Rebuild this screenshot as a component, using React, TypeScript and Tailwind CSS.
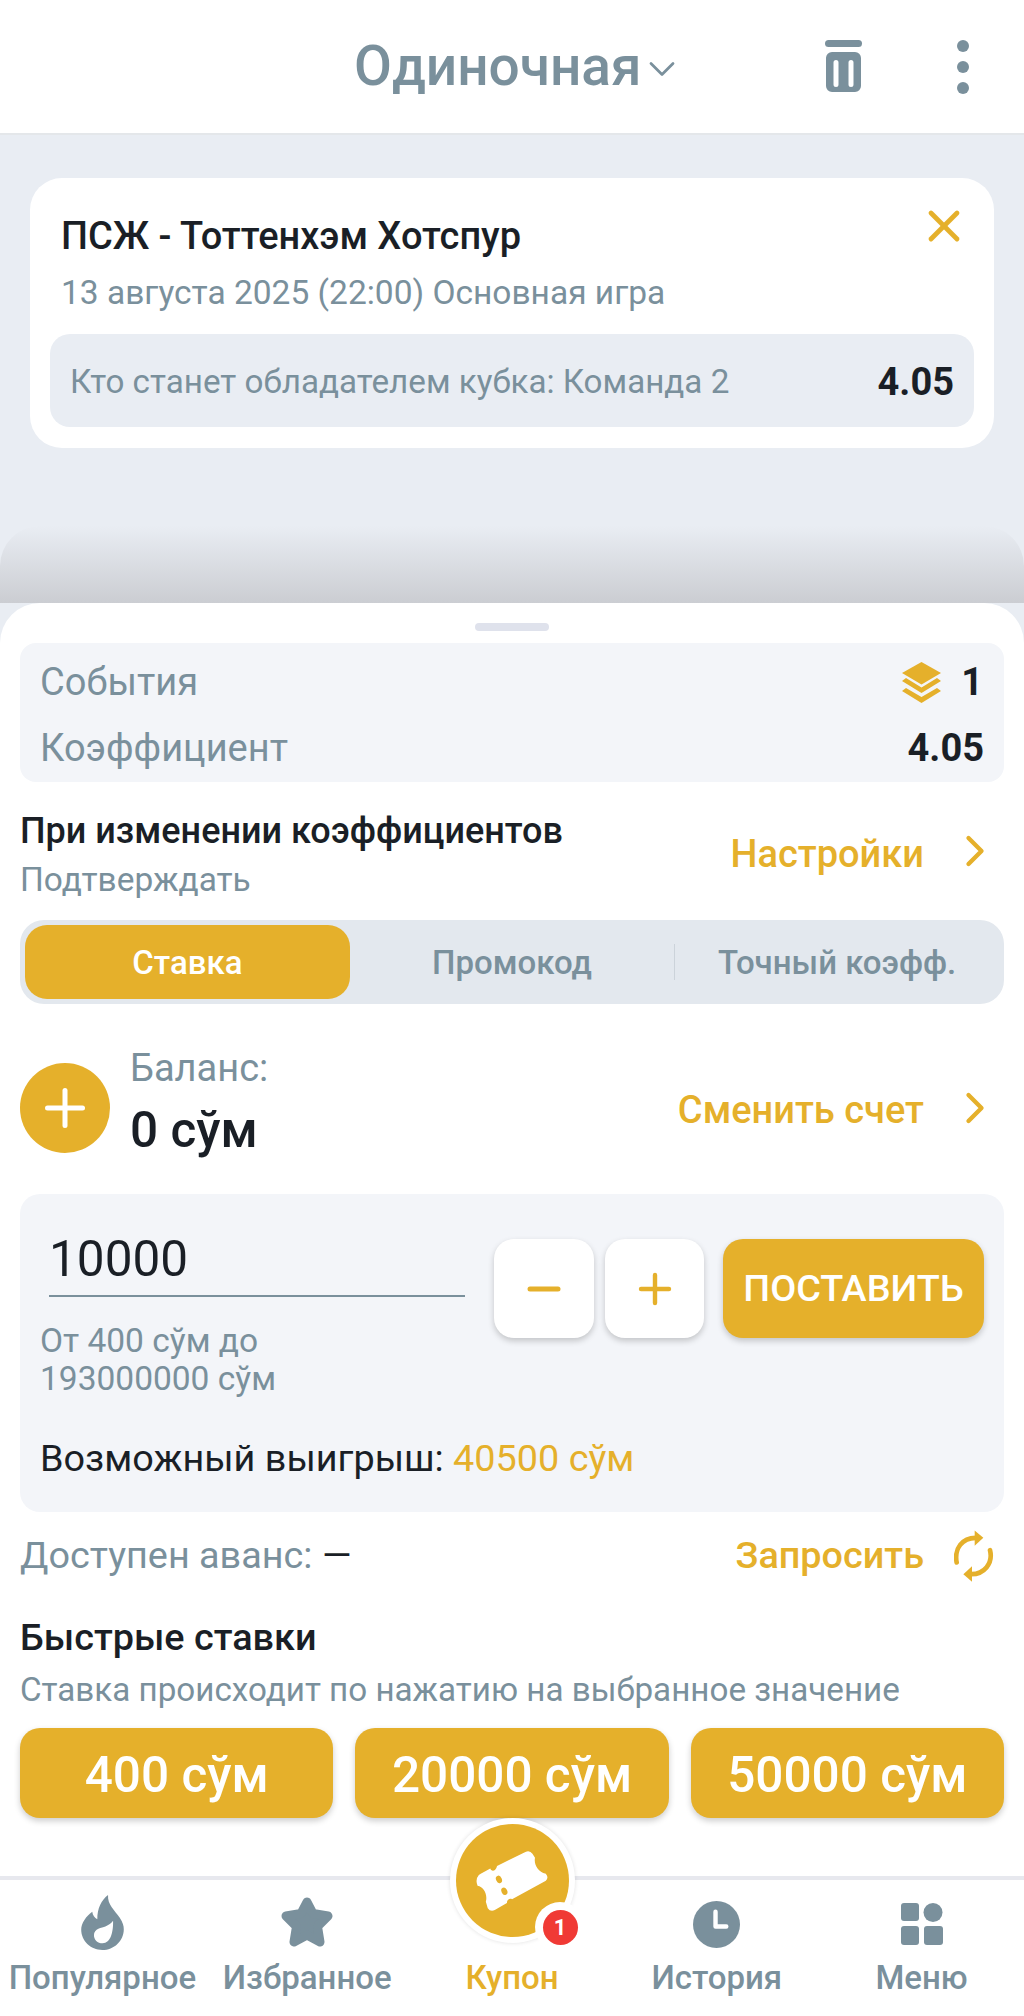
import { ChevronDown, ChevronRight, Minus, Plus, X } from "lucide-react";

const quickBets = ["400 сўм", "20000 сўм", "50000 сўм"];

function TrashIcon() {
  return (
    <svg width="38" height="54" viewBox="0 0 38 54" fill="#7a909c">
      <rect x="0" y="0" width="37" height="7" rx="3.5" />
      <path d="M7 12h23a6 6 0 0 1 6 6v28a6 6 0 0 1-6 6H7a6 6 0 0 1-6-6V18a6 6 0 0 1 6-6zm4 8a2.500 2.500 0 0 0-2.500 2.500v22a2.500 2.500 0 0 0 5 0v-22A2.500 2.500 0 0 0 11 20zm15 0a2.500 2.500 0 0 0-2.500 2.500v22a2.500 2.500 0 0 0 5 0v-22A2.500 2.500 0 0 0 26 20z" fillRule="evenodd" />
    </svg>
  );
}

function LayersIcon() {
  return (
    <svg width="39" height="41" viewBox="0 0 39 41" fill="#e5b02b">
      <path d="M19.500 0L39 11 19.500 22.500 0 11z" />
      <path d="M4 16l15.500 9.500L35 16l4 3-19.500 12L0 19z" />
      <path d="M4 26l15.500 9L35 26l4 3-19.500 12L0 29z" />
    </svg>
  );
}

function RefreshIcon() {
  return (
    <svg width="40" height="52" viewBox="30 25 120 155" fill="#e5b02b">
      <path d="M38 122C30 80 55 48 95 48" fill="none" stroke="#e5b02b" strokeWidth="14" strokeLinecap="round" />
      <path d="M92 26l26 22-26 24z" />
      <path d="M138 85C148 125 120 157 82 157" fill="none" stroke="#e5b02b" strokeWidth="14" strokeLinecap="round" />
      <path d="M84 133l-26 24 26 23z" />
    </svg>
  );
}

function FlameIcon() {
  return (
    <svg width="43" height="55" viewBox="0 0 127 164" fill="#7a909c">
      <path
        fillRule="evenodd"
        d="M80 0C78 30 100 45 115 68C124 82 127 92 127 102C127 137 98 164 63 164C28 164 0 137 0 103C0 85 15 62 33 50C34 60 40 68 48 72C48 40 60 15 80 0ZM95 77C90 85 82 90 72 94C62 98 38 100 38 120C38 133 48 144 64 144C88 144 96 110 95 77Z"
      />
    </svg>
  );
}

function StarIcon() {
  return (
    <svg width="52" height="50" viewBox="0 0 52 50" fill="#7a909c" stroke="#7a909c" strokeWidth="9" strokeLinejoin="round">
      <path d="M26 5l6 11.500L47 19 36.500 29.500 39 45l-13-7-13 7 2.500-15.500L5 19l15-2.500z" />
    </svg>
  );
}

function ClockIcon() {
  return (
    <svg className="mt-[5px]" width="47" height="47" viewBox="0 0 48 48">
      <circle cx="24" cy="24" r="24" fill="#7a909c" />
      <path d="M23 11v15h11" fill="none" stroke="#fff" strokeWidth="4.500" strokeLinecap="round" strokeLinejoin="round" />
    </svg>
  );
}

function MenuIcon() {
  return (
    <svg className="mt-[3px]" width="42" height="42" viewBox="0 0 42 42" fill="#7a909c">
      <rect x="0" y="0" width="18" height="18" rx="3" />
      <circle cx="32" cy="9.500" r="9.500" />
      <rect x="0" y="23" width="18" height="19" rx="3" />
      <rect x="23" y="23" width="19" height="19" rx="3" />
    </svg>
  );
}

function TicketIcon() {
  return (
    <svg width="75" height="64" viewBox="10 35 235 200" fill="#fff">
      <path d="M28 112L58 96C60 106 76 106 79 88L168 44Q182 38 190 50L198 62C194 82 206 106 232 112Q242 124 232 134L126 192C120 188 110 192 110 204L72 226Q58 232 50 220L44 200C50 178 38 154 18 150Q10 130 22 116Z" />
      <ellipse cx="85" cy="130" rx="9" ry="12" fill="#e5b02b" transform="rotate(-25 85 130)" />
      <ellipse cx="102" cy="167" rx="9" ry="12" fill="#e5b02b" transform="rotate(-25 102 167)" />
    </svg>
  );
}

function NavItem({ icon, label, active }: { icon?: React.ReactNode; label: string; active?: boolean }) {
  return (
    <div className="flex flex-col items-center">
      <div className="flex h-[56px] items-center justify-center">{icon}</div>
      <span className={`mt-[10px] text-[33px] leading-[36px] font-medium ${active ? "text-[#e5b02b]" : "text-[#7a909c]"}`}>
        {label}
      </span>
    </div>
  );
}

export default function App() {
  return (
    <div className="relative flex h-[2016px] w-full flex-col overflow-hidden bg-[#e9edf3] font-['Roboto',sans-serif]">
      {/* Header */}
      <header className="flex h-[135px] shrink-0 items-center border-b-2 border-[#e4e7ea] bg-white">
        <div className="ml-[354px] flex w-[471px] items-center">
          <span className="text-[55px] leading-none font-medium text-[#7a909c]">Одиночная</span>
          <ChevronDown className="mt-1 ml-[-2px] h-11 w-11 text-[#7a909c]" strokeWidth={1.5} />
        </div>
        <TrashIcon />
        <div className="ml-[94px] flex flex-col gap-[9px]">
          <span className="h-3 w-3 rounded-full bg-[#7a909c]" />
          <span className="h-3 w-3 rounded-full bg-[#7a909c]" />
          <span className="h-3 w-3 rounded-full bg-[#7a909c]" />
        </div>
      </header>

      {/* Event card */}
      <div className="mx-[30px] mt-[43px] h-[270px] shrink-0 rounded-[32px] bg-white px-5">
        <div className="flex h-[81px] justify-between pt-[36px]">
          <span className="pl-[11px] text-[38px] leading-[44px] font-medium text-[#1a1f26]">ПСЖ - Тоттенхэм Хотспур</span>
          <X className="mt-[-14px] mr-[4px] h-[52px] w-[52px] text-[#e5b02b]" strokeWidth={2.2} />
        </div>
        <div className="mt-[14px] pl-[11px] text-[33.5px] leading-[40px] text-[#7a909c]">13 августа 2025 (22:00) Основная игра</div>
        <div className="mt-[21px] flex h-[93px] items-center justify-between rounded-[20px] bg-[#e9edf3] px-5">
          <span className="pt-[3px] text-[33.2px] text-[#7a909c]">Кто станет обладателем кубка: Команда 2</span>
          <span className="pt-[3px] text-[38px] font-bold text-[#1a1f26]">4.05</span>
        </div>
      </div>

      {/* Sheet shadow */}
      <div className="mt-[78px] h-[77px] shrink-0 rounded-t-[40px] bg-gradient-to-b from-[#e9edf3] to-[#cbcdd2]" />

      {/* Bottom sheet */}
      <div className="flex min-h-0 flex-1 flex-col rounded-t-[40px] bg-white">
        <div className="flex flex-1 flex-col px-5">
          <div className="mx-auto mt-5 h-2 w-[74px] shrink-0 rounded-full bg-[#dfe2ec]" />

          {/* Summary */}
          <div className="mt-3 flex h-[139px] flex-col justify-between rounded-[16px] bg-[#f3f5f9] px-5 pt-[13px] pb-[8px]">
            <div className="flex h-[52px] items-center justify-between">
              <span className="text-[38px] text-[#7a909c]">События</span>
              <span className="flex items-center gap-5">
                <LayersIcon />
                <span className="pr-[1px] text-[38px] font-bold text-[#1a1f26]">1</span>
              </span>
            </div>
            <div className="flex h-[52px] items-center justify-between">
              <span className="text-[38px] text-[#7a909c]">Коэффициент</span>
              <span className="text-[38px] font-bold text-[#1a1f26]">4.05</span>
            </div>
          </div>

          {/* Odds settings */}
          <div className="flex h-[138px] shrink-0 items-center justify-between">
            <div className="mt-[8px] flex flex-col">
              <span className="text-[36px] leading-[40px] font-medium text-[#1a1f26]">При изменении коэффициентов</span>
              <span className="mt-[10px] text-[33.4px] leading-[38px] text-[#7a909c]">Подтверждать</span>
            </div>
            <span className="flex items-center gap-[25px] pr-[3px]">
              <span className="mt-[7px] text-[38px] font-medium text-[#e5b02b]">Настройки</span>
              <ChevronRight className="h-[52px] w-[52px] text-[#e5b02b]" strokeWidth={2} />
            </span>
          </div>

          {/* Tabs */}
          <div className="grid h-[84px] shrink-0 grid-cols-3 items-center rounded-[24px] bg-[#e3e8ee] p-[5px]">
            <div className="flex h-[74px] items-center justify-center rounded-[22px] bg-[#e5b02b] pt-[2px] text-[33px] font-medium text-white">Ставка</div>
            <div className="flex items-center justify-center pt-[2px] text-[33px] font-medium text-[#7a909c]">Промокод</div>
            <div className="flex h-[36px] items-center justify-center border-l border-[#ccd3da] pt-[2px] text-[33px] font-medium text-[#7a909c]">Точный коэфф.</div>
          </div>

          {/* Balance */}
          <div className="mt-[59px] flex h-[90px] shrink-0 items-center justify-between">
            <div className="flex items-center gap-5">
              <div className="flex h-[90px] w-[90px] items-center justify-center rounded-full bg-[#e5b02b]">
                <Plus className="h-[60px] w-[60px] text-white" strokeWidth={2} />
              </div>
              <div className="mt-[-10px] flex flex-col">
                <span className="text-[38px] leading-[40px] text-[#7a909c]">Баланс:</span>
                <span className="mt-[14px] text-[49.5px] leading-[56px] font-medium text-[#1a1f26]">0 сўм</span>
              </div>
            </div>
            <span className="flex items-center gap-[25px] pr-[3px]">
              <span className="mt-1 text-[38px] font-medium text-[#e5b02b]">Сменить счет</span>
              <ChevronRight className="h-[52px] w-[52px] text-[#e5b02b]" strokeWidth={2} />
            </span>
          </div>

          {/* Stake box */}
          <div className="mt-[41px] h-[318px] shrink-0 rounded-[20px] bg-[#f3f5f9] pt-[45px] pr-5">
            <div className="flex h-[185px]">
              <div className="w-[474px] shrink-0 pl-5">
                <div className="ml-[9px] h-[58px] w-[416px] border-b-2 border-[#7a909c]">
                  <span className="relative top-[-10px] text-[49.5px] leading-[60px] text-[#1a1f26]">10000</span>
                </div>
                <div className="mt-[25px] text-[33.5px] leading-[38px] text-[#7a909c]">
                  От 400 сўм до
                  <br />
                  193000000 сўм
                </div>
              </div>
              <div className="flex h-[99px] gap-[11px]">
                <div className="flex w-[100px] items-center justify-center rounded-[20px] bg-white shadow-[0_3px_6px_rgba(0,0,0,0.2)]">
                  <Minus className="h-12 w-12 text-[#e5b02b]" strokeWidth={2.5} />
                </div>
                <div className="flex w-[99px] items-center justify-center rounded-[20px] bg-white shadow-[0_3px_6px_rgba(0,0,0,0.2)]">
                  <Plus className="h-12 w-12 text-[#e5b02b]" strokeWidth={2.2} />
                </div>
                <div className="ml-[8px] flex w-[261px] items-center justify-center rounded-[20px] bg-[#e5b02b] text-[37.8px] font-medium text-white shadow-[0_3px_6px_rgba(0,0,0,0.2)]">ПОСТАВИТЬ</div>
              </div>
            </div>
            <div className="mt-[14px] pl-5 text-[37.8px] leading-[40px] text-[#1a1f26]">
              Возможный выигрыш: <span className="text-[#e5b02b]">40500 сўм</span>
            </div>
          </div>

          {/* Advance */}
          <div className="flex h-[90px] shrink-0 items-center justify-between pb-[3px]">
            <span className="text-[37.8px] text-[#7a909c]">
              Доступен аванс: <span className="text-[#1a1f26]">—</span>
            </span>
            <span className="flex items-center gap-[30px] pr-[10px]">
              <span className="text-[37.8px] font-medium text-[#e5b02b]">Запросить</span>
              <RefreshIcon />
            </span>
          </div>

          {/* Quick bets */}
          <div className="mt-[15px] text-[37.8px] leading-[40px] font-medium text-[#1a1f26]">Быстрые ставки</div>
          <div className="mt-[15px] text-[33.2px] leading-[36px] text-[#7a909c]">Ставка происходит по нажатию на выбранное значение</div>
          <div className="mt-[20px] grid grid-cols-3 gap-[22px]">
            {quickBets.map((bet) => (
              <div key={bet} className="flex h-[90px] items-center justify-center rounded-[20px] bg-[#e5b02b] pt-[4px] text-[49.5px] font-medium text-white shadow-[0_3px_6px_rgba(0,0,0,0.2)]">
                {bet}
              </div>
            ))}
          </div>
        </div>

        {/* Bottom nav */}
        <nav className="grid h-[140px] shrink-0 grid-cols-5 border-t-4 border-[#e7e8ee] pt-[14px]">
          <NavItem icon={<FlameIcon />} label="Популярное" />
          <NavItem icon={<StarIcon />} label="Избранное" />
          <NavItem label="Купон" active />
          <NavItem icon={<ClockIcon />} label="История" />
          <NavItem icon={<MenuIcon />} label="Меню" />
        </nav>
      </div>

      {/* Coupon button */}
      <div className="absolute top-[1818px] left-[450px] flex h-[125px] w-[125px] items-center justify-center rounded-full bg-white shadow-[0_0_4px_rgba(0,0,0,0.12)]">
        <div className="flex h-[113px] w-[113px] items-center justify-center rounded-full bg-[#e5b02b]">
          <TicketIcon />
        </div>
        <div className="absolute top-[84px] left-[85px] flex h-[50px] w-[50px] items-center justify-center rounded-full bg-white">
          <div className="flex h-[35px] w-[35px] items-center justify-center rounded-full bg-[#f03a35] text-[22px] font-bold text-white">1</div>
        </div>
      </div>
    </div>
  );
}
